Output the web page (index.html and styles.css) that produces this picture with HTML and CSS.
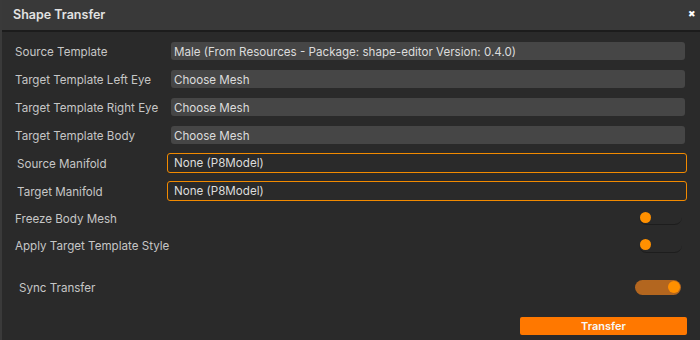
FILE: index.html
```html
<!DOCTYPE html><html lang="en"><head><meta charset="UTF-8"/>
<title>Shape Transfer</title>
<link rel="stylesheet" href="styles.css"></head><body>

<!-- window -->
<div class="win">
  <div class="titlebar">
    <span class="title">Shape Transfer</span>
    <span class="close">&#x2716;</span>
  </div>

  <div class="content">
    <div class="row">
      <label class="lbl">Source Template</label>
      <div class="field">Male (From Resources - Package: shape-editor Version: 0.4.0)</div>
    </div>
    <div class="row">
      <label class="lbl">Target Template Left Eye</label>
      <div class="field">Choose Mesh</div>
    </div>
    <div class="row">
      <label class="lbl">Target Template Right Eye</label>
      <div class="field">Choose Mesh</div>
    </div>
    <div class="row">
      <label class="lbl">Target Template Body</label>
      <div class="field">Choose Mesh</div>
    </div>

    <div class="row">
      <label class="lbl obj">Source Manifold</label>
      <div class="field objfield">None (P8Model)</div>
    </div>
    <div class="row short">
      <label class="lbl obj">Target Manifold</label>
      <div class="field objfield">None (P8Model)</div>
    </div>

    <div class="row short">
      <label class="lbl">Freeze Body Mesh</label>
      <div class="toggle"><span class="knob"></span></div>
    </div>
    <div class="row">
      <label class="lbl">Apply Target Template Style</label>
      <div class="toggle"><span class="knob"></span></div>
    </div>

    <div class="row sync">
      <label class="lbl">Sync Transfer</label>
      <div class="toggle on"><span class="knob"></span></div>
    </div>

    <div class="actions">
      <button class="btn">Transfer</button>
    </div>
  </div>
</div>

</body></html>
```

FILE: styles.css
```css
/* reset */
*{box-sizing:border-box;margin:0;padding:0}
body{font-family:Inter,"Noto Sans",sans-serif;background:#2a2a2a;color:#c6c6c6;
     width:700px;height:340px;overflow:hidden}

/* window */
.win{width:700px;height:340px;display:flex;flex-direction:column;
     border-left:2px solid #3a3a3a;background:#2a2a2a}
.titlebar{height:32px;background:#393939;border-bottom:2px solid #1c1c1c;
          display:flex;align-items:center;justify-content:space-between;padding:0 4px 2px 11px}
.title{font-size:12.5px;font-weight:600;color:#e2e2e2}
.close{font-size:9px;color:#fff;margin-top:-2px}

/* rows */
.content{flex:1;padding:5px 0 0 13px;display:flex;flex-direction:column}
.row{height:28px;display:flex;align-items:center;font-size:11.6px}
.row.short{height:27px}
.lbl{width:156px;flex:none;padding-top:2px;white-space:nowrap}
.lbl.obj{width:152px;padding-left:2px}
.field{width:514px;height:18px;background:#464646;border-radius:3px;color:#dcdcdc;
       padding:1px 3px 0;line-height:18px;font-size:11.6px;white-space:nowrap}
.objfield{width:520px;height:20px;background:transparent;border:1px solid #f28a00;
          line-height:18px;padding:0 6px}

/* toggles */
.toggle{margin-left:auto;margin-right:18px;width:43px;height:15px;border-radius:8px;
        border-bottom:1px solid #1d1d1d;display:flex;align-items:center;padding:0 1px}
.knob{width:11px;height:11px;border-radius:50%;background:#ff9000}
.row.sync{margin-top:14px}
.row.sync .lbl{padding-left:4px}
.toggle.on{width:46px;margin-right:19px;background:#b3661f;border:none;justify-content:flex-end;padding:0 1px}
.toggle.on .knob{width:12px;height:12px}

/* button */
.actions{margin-top:16px;display:flex;justify-content:flex-end;padding-right:13px}
.btn{width:167px;height:18px;background:#ff7800;border:none;border-radius:2px;
     color:#f8f8f8;font-family:Inter,sans-serif;font-size:11px;font-weight:600}
```
